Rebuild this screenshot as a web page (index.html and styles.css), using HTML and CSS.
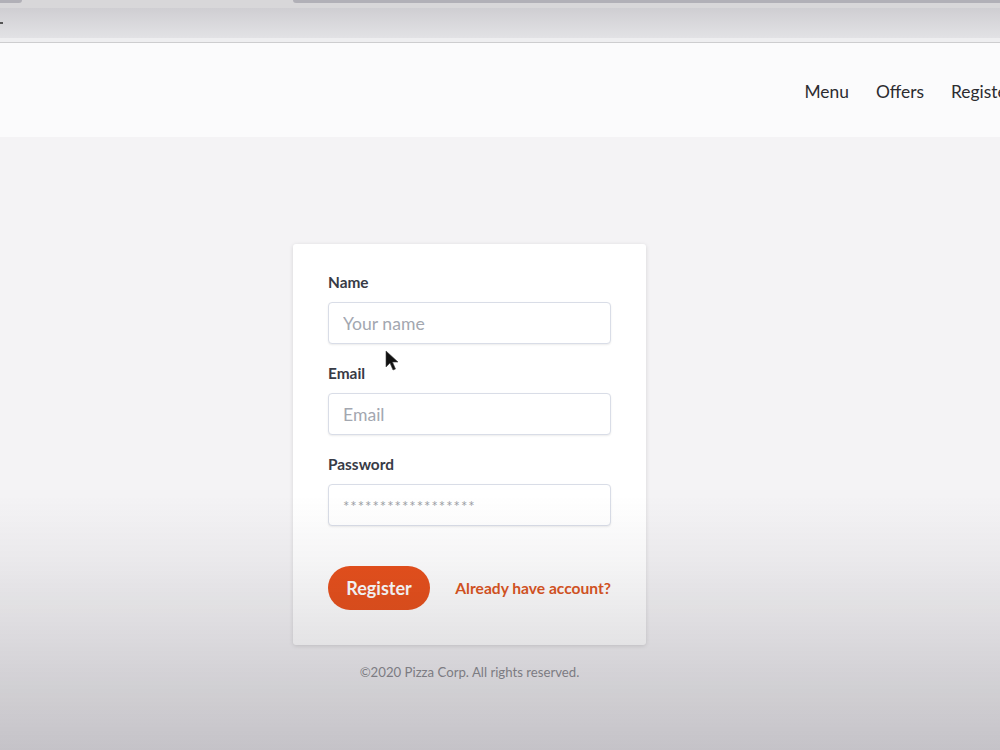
FILE: index.html
```html
<!DOCTYPE html>
<html lang="en">
<head>
<meta charset="utf-8">
<title>Register – Pizza Corp</title>
<link rel="stylesheet" href="styles.css">
</head>
<body>
  <div class="chrome">
    <div class="tabstrip">
      <span class="tab tab-left"></span>
      <span class="tab tab-right"></span>
    </div>
    <div class="toolbar"><span class="tick"></span></div>
    <div class="toolbar-foot"></div>
  </div>

  <header class="site-header">
    <nav class="nav">
      <a href="#">Menu</a>
      <a href="#">Offers</a>
      <a href="#">Register</a>
    </nav>
  </header>

  <main class="main">
    <form class="card">
      <label class="field-label" for="name">Name</label>
      <input class="field-input" id="name" type="text" placeholder="Your name">

      <label class="field-label" for="email">Email</label>
      <input class="field-input" id="email" type="email" placeholder="Email">

      <label class="field-label" for="password">Password</label>
      <input class="field-input field-password" id="password" type="text" placeholder="******************">

      <div class="actions">
        <button class="btn" type="button">Register</button>
        <a class="link" href="#">Already have account?</a>
      </div>
    </form>
    <p class="footer">©2020 Pizza Corp. All rights reserved.</p>
  </main>

  <svg class="pointer" width="14" height="22" viewBox="0 0 14 22">
    <path d="M1 1 L1 17 L5 13 L8 20 L10.5 19 L7.5 12 L13 12 Z" fill="#111" stroke="#444" stroke-width="0.6"/>
  </svg>
</body>
</html>
```
FILE: styles.css
```css
* { box-sizing: border-box; }

html, body {
  margin: 0;
  height: 100%;
}

body {
  font-family: Lato, "Open Sans", sans-serif;
  background: #f4f3f5;
  overflow: hidden;
  position: relative;
  min-height: 750px;
}

/* soft darkening toward the bottom of the screen */
body::after {
  content: "";
  position: fixed;
  inset: 0;
  pointer-events: none;
  background: linear-gradient(to bottom,
    rgba(30, 25, 40, 0) 0px,
    rgba(30, 25, 40, 0) 495px,
    rgba(30, 25, 40, 0.045) 560px,
    rgba(30, 25, 40, 0.12) 645px,
    rgba(30, 25, 40, 0.22) 750px);
}

/* browser frame */
.chrome {
  display: flex;
  flex-direction: column;
}

.tabstrip {
  height: 8px;
  background: #d8d7d9;
  display: flex;
  justify-content: space-between;
}

.tab {
  height: 3px;
  background: #b1b0b7;
}

.tab-left {
  width: 22px;
  border-bottom-right-radius: 4px;
}

.tab-right {
  width: 707px;
  border-bottom-left-radius: 4px;
}

.toolbar {
  height: 30px;
  background: linear-gradient(to bottom, #cfced2, #e2e2e5);
  display: flex;
  align-items: center;
}

.tick {
  width: 3px;
  height: 2px;
  background: #555;
}

.toolbar-foot {
  height: 5px;
  background: #eeeef0;
  border-bottom: 1px solid #cdcdcf;
}

/* site header */
.site-header {
  height: 94px;
  background: #fbfbfc;
  display: flex;
  justify-content: flex-end;
  align-items: center;
}

.nav {
  display: flex;
  gap: 27px;
  margin-right: -13px;
  padding-top: 2px;
}

.nav a {
  color: #2c2c30;
  text-decoration: none;
  font-size: 17.4px;
}

/* page body */
.main {
  display: flex;
  flex-direction: column;
  align-items: center;
  padding-top: 107px;
  padding-right: 61px;
}

.card {
  width: 353px;
  background: #fff;
  border-radius: 3px;
  box-shadow: 0 1px 4px rgba(0, 0, 0, 0.13);
  padding: 29px 35px 35px;
  display: flex;
  flex-direction: column;
}

.field-label {
  font-size: 15.4px;
  font-weight: 700;
  color: #383b46;
  line-height: 18px;
  margin-bottom: 11px;
}

.field-input {
  height: 42px;
  border: 1px solid #d9dde7;
  border-radius: 4px;
  box-shadow: 0 1px 2px rgba(0, 0, 0, 0.08);
  padding: 0 14px;
  font-family: inherit;
  font-size: 17.6px;
  color: #333;
  margin-bottom: 20px;
  background: #fff;
}

.field-input::placeholder {
  color: #a3a7b0;
}

.field-password::placeholder {
  color: #9d9fa6;
  font-size: 15px;
  letter-spacing: 1px;
}

.actions {
  display: flex;
  align-items: center;
  justify-content: space-between;
  margin-top: 20px;
}

.btn {
  height: 44px;
  width: 102px;
  border: none;
  border-radius: 22px;
  background: #e9511c;
  color: #fff;
  font-family: inherit;
  font-size: 18px;
  font-weight: 700;
}

.link {
  color: #dd561f;
  font-size: 15.6px;
  font-weight: 700;
  text-decoration: none;
}

.footer {
  margin: 19px 0 0;
  font-size: 13.2px;
  line-height: 16px;
  color: #8d8d92;
}

.pointer {
  position: absolute;
  left: 385px;
  top: 350px;
}
```
